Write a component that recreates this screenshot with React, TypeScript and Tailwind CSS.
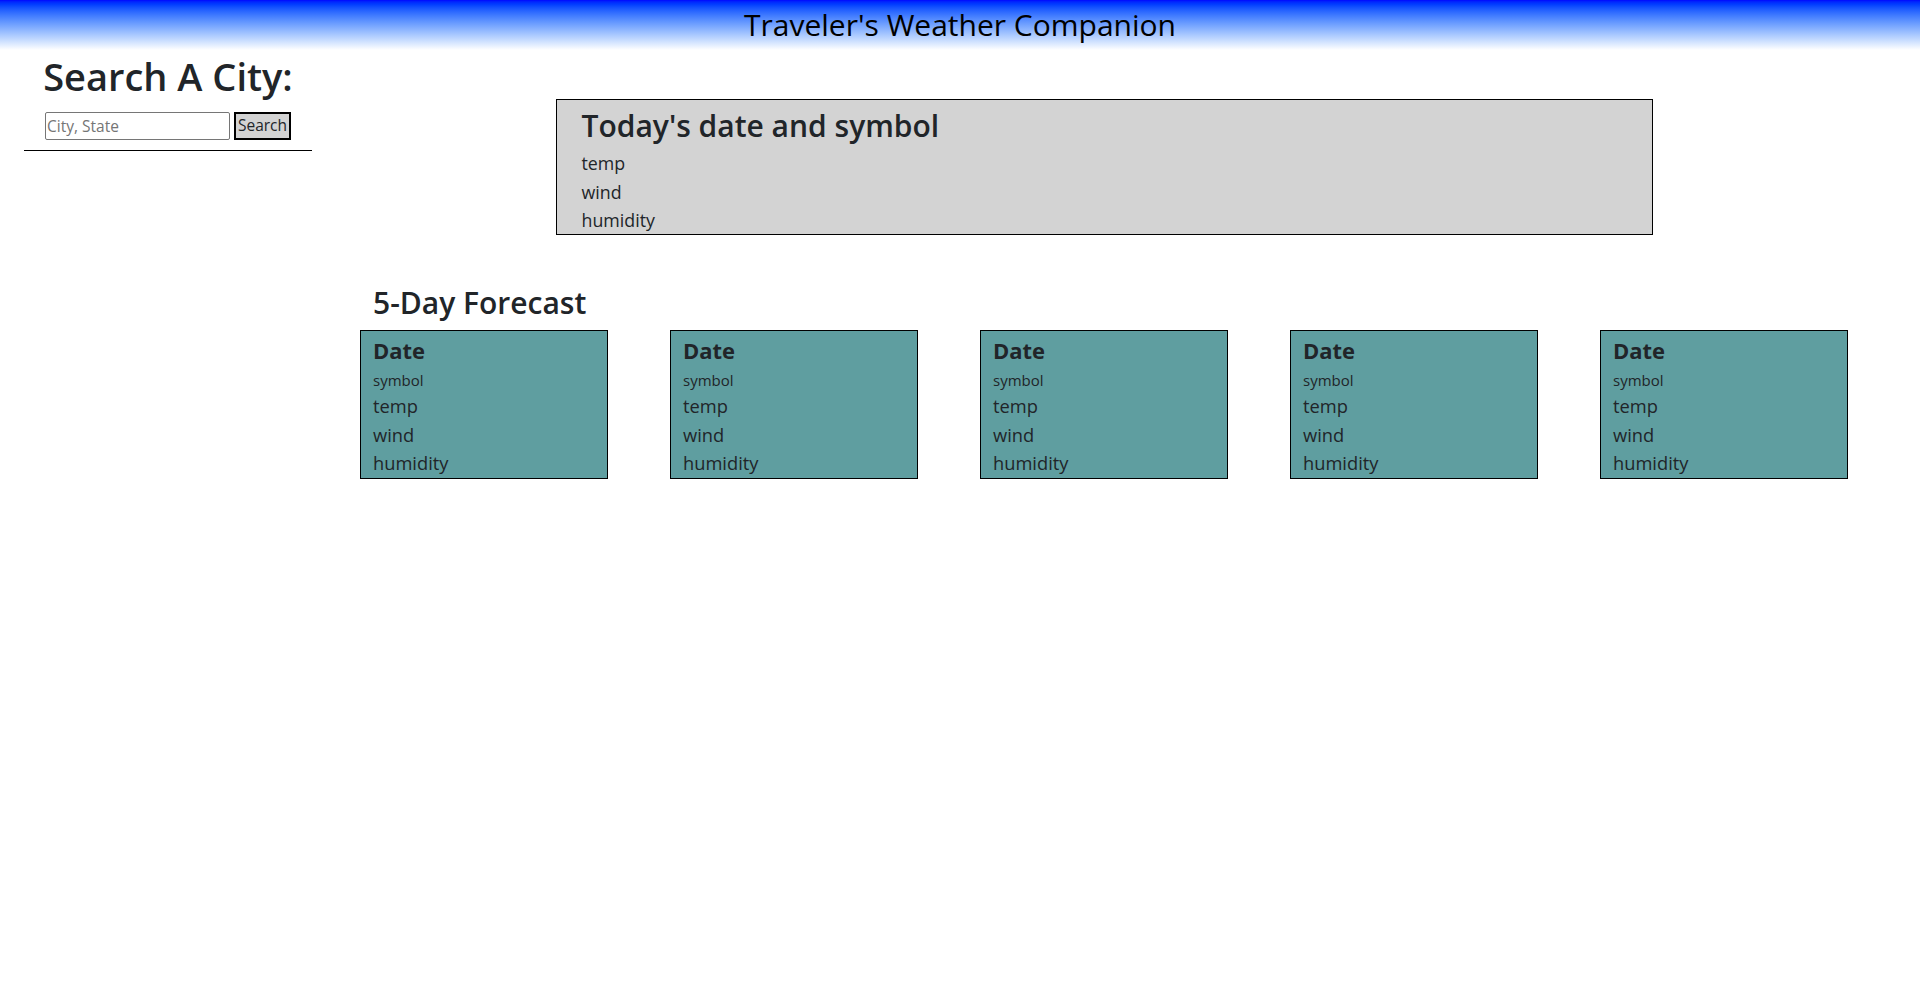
import React from 'react';

const days = ['1', '2', '3', '4', '5'];

const ForecastCard: React.FC = () => (
  <div className="w-[248px] h-[149px] shrink-0 overflow-hidden border border-black bg-[#5f9ea0] pl-[12px] pt-[6px]">
    <h4 className="text-[22px] leading-[26px] font-bold">Date</h4>
    <p className="mt-[5px] text-[15px] leading-[24px]">symbol</p>
    <p className="text-[18.3px] leading-[28.5px]">temp</p>
    <p className="text-[18.3px] leading-[28.5px]">wind</p>
    <p className="text-[18.3px] leading-[28.5px]">humidity</p>
  </div>
);

const App: React.FC = () => {
  return (
    <div className="min-h-[1007px] bg-white text-[#212529] font-['Open_Sans',sans-serif]">
      <header className="h-[50px] bg-gradient-to-b from-[#0000ff] to-white text-center">
        <h1 className="text-[30px] leading-[50px] text-black">Traveler's Weather Companion</h1>
      </header>

      <div className="flex">
        {/* search panel */}
        <aside className="ml-[24px] w-[288px] shrink-0 text-center">
          <h2 className="mt-[4px] text-[38px] leading-[45px] font-semibold">Search A City:</h2>
          <form className="mt-[13px] flex justify-center gap-[4px]" onSubmit={(e) => e.preventDefault()}>
            <input
              type="text"
              placeholder="City, State"
              className="w-[185px] h-[28px] border border-[#767676] rounded-[2px] px-[1px] text-[15.5px] placeholder:text-[#757575] bg-white"
            />
            <button className="w-[57px] h-[28px] border-2 border-black bg-[#d3d3d3] text-[15.5px] leading-none">
              Search
            </button>
          </form>
          <hr className="mt-[10px] border-t border-black" />
        </aside>

        {/* results */}
        <main className="flex-1 pr-[24px] flex flex-col items-center">
          <section className="mt-[49px] w-[1097px] h-[136px] border border-black bg-[#d3d3d3] pl-[25px] pt-[8px]">
            <h2 className="text-[30px] leading-[36px] font-semibold">Today's date and symbol</h2>
            <div className="mt-[5px]">
              <p className="text-[17.8px] leading-[28.5px]">temp</p>
              <p className="text-[17.8px] leading-[28.5px]">wind</p>
              <p className="text-[17.8px] leading-[28.5px]">humidity</p>
            </div>
          </section>

          <section className="mt-[50px] w-[1488px]">
            <h3 className="pl-[13px] text-[30px] leading-[36px] font-semibold">5-Day Forecast</h3>
            <div className="mt-[9px] flex gap-[62px]">
              {days.map((d) => (
                <ForecastCard key={d} />
              ))}
            </div>
          </section>
        </main>
      </div>
    </div>
  );
};

export default App;
